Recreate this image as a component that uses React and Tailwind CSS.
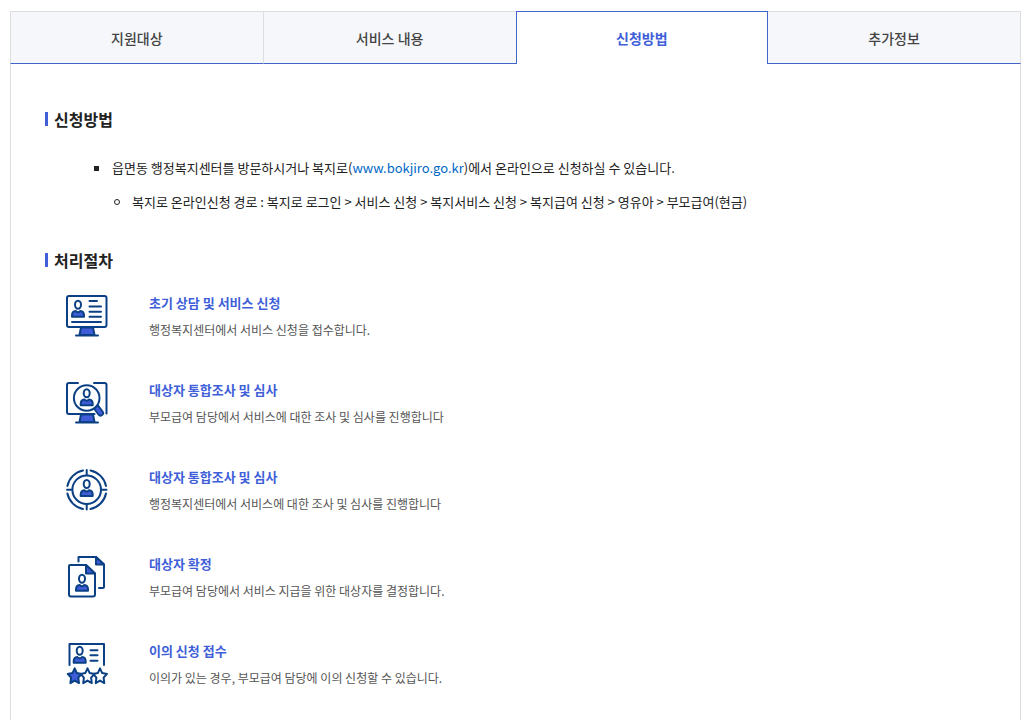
const LINE = '#0b4184';
const FILL = '#405cd8';

function Icon({ children }) {
  return (
    <svg
      viewBox="0 0 42 42"
      className="size-[42px] shrink-0"
      fill="none"
      stroke={LINE}
      strokeWidth="2"
      strokeLinecap="round"
      strokeLinejoin="round"
      aria-hidden="true"
    >
      {children}
    </svg>
  );
}

function Person({ x, y }) {
  return (
    <g transform={`translate(${x} ${y})`}>
      <ellipse cx="0" cy="0" rx="3" ry="4" fill="#fff" />
      <path d="M-6 12V10.500C-6 7.800-4.500 6.600-2.300 6.300Q0 8.600 2.300 6.300C4.500 6.600 6 7.800 6 10.500V12Z" fill={FILL} />
    </g>
  );
}

function Stand() {
  return <path d="M15 32.500H27L28.500 40H13.500Z M10 40.500H32" fill={FILL} />;
}

function ApplyIcon() {
  return (
    <Icon>
      <Stand />
      <rect x="1" y="1" width="39.500" height="31" rx="2" fill="#fff" />
      <Person x={12} y={9.7} />
      <path d="M23.500 6H31M23.500 11.500H35M23.500 16.700H35M23.500 21.700H35M6 27H35" />
    </Icon>
  );
}

function ReviewIcon() {
  return (
    <Icon>
      <Stand />
      <path d="M12 1H3Q1 1 1 3V30Q1 32 3 32H28.500M28 1H38.500Q40.500 1 40.500 3V31.500" />
      <path d="M30 25L34.500 31" strokeWidth="7" />
      <path d="M31 26.500L34.500 31" stroke={FILL} strokeWidth="3.500" />
      <circle cx="20.700" cy="16" r="12.800" fill="#fff" />
      <Person x={20.7} y={11.2} />
    </Icon>
  );
}

function TargetIcon() {
  return (
    <Icon>
      <circle cx="20.700" cy="20.700" r="14.300" />
      <path d="M17 1.400A20 20 0 0 0 1.400 17M24.500 1.400A20 20 0 0 1 40 17M40 24.500A20 20 0 0 1 24.500 40M17 40A20 20 0 0 1 1.400 24.500" />
      <path d="M20.700 1V6M20.700 35.500V40.500M1 20.700H6M35.500 20.700H40.500" />
      <Person x={20.7} y={15} />
    </Icon>
  );
}

function DocumentIcon() {
  return (
    <Icon>
      <path d="M12.500 5.500V1H30L38 8.500V31Q38 32 37 32H33" fill="#fff" />
      <path d="M30 1L38 8.500H30Z" fill={FILL} />
      <path d="M4 9H20L29 17.500V38.500Q29 40.500 27 40.500H5Q3 40.500 3 38.500V10Q3 9 4 9Z" fill="#fff" />
      <path d="M20 9L29 17.500H20Z" fill={FILL} />
      <Person x={16} y={22.7} />
    </Icon>
  );
}

const STAR = 'M0 -7.500L2.200 -2.700L7 -1.900L3.600 1.900L4.300 7.300L0 4.800L-4.300 7.300L-3.600 1.900L-7 -1.900L-2.200 -2.700Z';

function AppealIcon() {
  return (
    <Icon>
      <path d="M3.500 22V1H38V22" />
      <Person x={13.7} y={7.8} />
      <path d="M24.500 7.300H31.500M24.500 12.300H31.500M24.500 17.700H31.500" />
      <path d={STAR} transform="translate(34 32.800)" fill="#fff" />
      <path d={STAR} transform="translate(21.500 32.800)" fill="#fff" />
      <path d={STAR} transform="translate(8.700 32.800)" fill={FILL} />
    </Icon>
  );
}

const tabs = ['지원대상', '서비스 내용', '신청방법', '추가정보'];

const steps = [
  { icon: ApplyIcon, title: '초기 상담 및 서비스 신청', text: '행정복지센터에서 서비스 신청을 접수합니다.' },
  { icon: ReviewIcon, title: '대상자 통합조사 및 심사', text: '부모급여 담당에서 서비스에 대한 조사 및 심사를 진행합니다' },
  { icon: TargetIcon, title: '대상자 통합조사 및 심사', text: '행정복지센터에서 서비스에 대한 조사 및 심사를 진행합니다' },
  { icon: DocumentIcon, title: '대상자 확정', text: '부모급여 담당에서 서비스 지급을 위한 대상자를 결정합니다.' },
  { icon: AppealIcon, title: '이의 신청 접수', text: '이의가 있는 경우, 부모급여 담당에 이의 신청할 수 있습니다.' },
];

function Heading({ children }) {
  return (
    <h2 className="flex items-center gap-1.5 text-base leading-6 font-bold text-[#222]">
      <span className="h-3.5 w-[3px] bg-[#405fd8]" />
      {children}
    </h2>
  );
}

export default function App() {
  return (
    <main className="min-h-screen bg-white pt-[11px] pr-2 pl-2.5 font-['Noto_Sans_CJK_KR','Noto_Sans',sans-serif]">
      <div role="tablist" className="grid grid-cols-4">
        {tabs.map((label, i) => {
          const active = i === 2;
          return (
            <button
              key={label}
              id={`tab-${i}`}
              type="button"
              role="tab"
              aria-selected={active}
              aria-controls={active ? 'panel' : undefined}
              className={
                active
                  ? 'h-[53px] border-x border-t border-[#4263c7] bg-white text-sm font-bold text-[#405fd8]'
                  : `h-[53px] border-t border-b border-t-[#dcdedf] border-b-[#4263c7] bg-[#f5f7fb] text-sm font-medium text-[#444] ${
                      i < 2 ? 'border-l border-l-[#dcdedf]' : 'border-r border-r-[#dcdedf]'
                    }`
              }
            >
              {label}
            </button>
          );
        })}
      </div>

      <section
        id="panel"
        role="tabpanel"
        aria-labelledby="tab-2"
        className="min-h-[calc(100vh-64px)] border-x border-[#dcdedf] px-[34px] pt-[43px]"
      >
        <Heading>신청방법</Heading>
        <ul className="mt-[25px] ml-[49px] text-[13px] leading-6 text-[#222]">
          <li>
            <div className="flex items-center gap-[13px]">
              <span className="size-[5px] shrink-0 bg-[#222]" />
              <p>
                읍면동 행정복지센터를 방문하시거나 복지로(
                <a href="https://www.bokjiro.go.kr" className="text-[#0068c8]">www.bokjiro.go.kr</a>
                )에서 온라인으로 신청하실 수 있습니다.
              </p>
            </div>
            <ul className="mt-2.5 ml-5">
              <li className="flex items-center gap-3">
                <span className="size-1.5 shrink-0 rounded-full border border-[#222]" />
                <p>복지로 온라인신청 경로 : 복지로 로그인 &gt; 서비스 신청 &gt; 복지서비스 신청 &gt; 복지급여 신청 &gt; 영유아 &gt; 부모급여(현금)</p>
              </li>
            </ul>
          </li>
        </ul>

        <div className="mt-[34px]">
          <Heading>처리절차</Heading>
        </div>
        <ol className="mt-[19px] ml-[21px] flex flex-col gap-[37px]">
          {steps.map(({ icon: StepIcon, title, text }, i) => (
            <li key={i} className="flex items-start gap-[41px]">
              <div className="pt-1">
                <StepIcon />
              </div>
              <div className="h-[50px]">
                <h3 className="text-[13px] leading-6 font-bold text-[#405fd8]">{title}</h3>
                <p className="mt-1 text-xs leading-[22px] text-[#555]">{text}</p>
              </div>
            </li>
          ))}
        </ol>
      </section>
    </main>
  );
}
